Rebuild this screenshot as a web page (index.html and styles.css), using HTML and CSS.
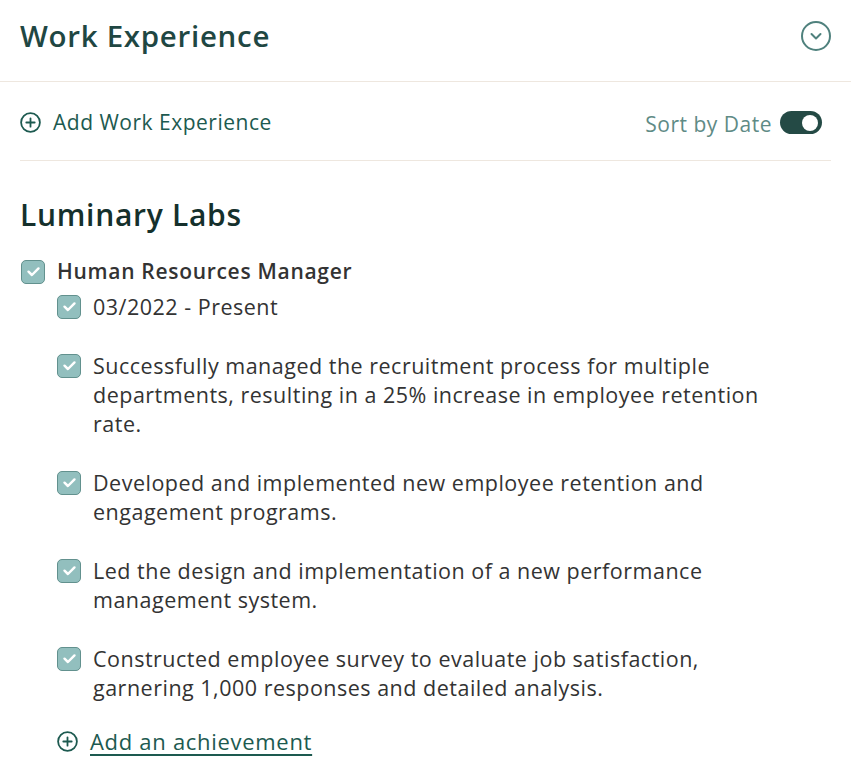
FILE: index.html
```html
<!DOCTYPE html>
<html lang="en">
<head>
<meta charset="utf-8">
<title>Work Experience</title>
<link rel="stylesheet" href="styles.css">
</head>
<body>
<section class="panel">
  <header class="panel-header">
    <h1 class="panel-title">Work Experience</h1>
    <button class="collapse-btn" aria-label="Collapse">
      <svg width="32" height="32" viewBox="0 0 32 32" fill="none" stroke="#4f817d" stroke-width="2" stroke-linecap="round" stroke-linejoin="round"><circle cx="16" cy="16" r="14"/><path d="M11.5 14l4.5 4.5 4.5-4.5"/></svg>
    </button>
  </header>

  <div class="actions">
    <a class="add-link" href="#">
      <svg class="plus-icon" width="21" height="21" viewBox="0 0 21 21" fill="none" stroke="currentColor" stroke-width="1.8" stroke-linecap="round"><circle cx="10.5" cy="10.5" r="9.4"/><path d="M10.5 6.3v8.4M6.3 10.5h8.4"/></svg>
      <span>Add Work Experience</span>
    </a>
    <label class="sort">
      <span>Sort by Date</span>
      <span class="toggle"><span class="knob"></span></span>
    </label>
  </div>

  <div class="company">
    <h2 class="company-name">Luminary Labs</h2>
    <div class="role">
      <span class="check"><svg viewBox="0 0 24 24"><path d="M6.3 12.2l3.9 3.8 7.5-7.5" fill="none" stroke="#fff" stroke-width="2.8" stroke-linecap="round" stroke-linejoin="round"/></svg></span>
      <span class="role-title">Human Resources Manager</span>
    </div>
    <ul class="items">
      <li class="item">
        <span class="check"><svg viewBox="0 0 24 24"><path d="M6.3 12.2l3.9 3.8 7.5-7.5" fill="none" stroke="#fff" stroke-width="2.8" stroke-linecap="round" stroke-linejoin="round"/></svg></span>
        <span class="item-text">03/2022 - Present</span>
      </li>
      <li class="item">
        <span class="check"><svg viewBox="0 0 24 24"><path d="M6.3 12.2l3.9 3.8 7.5-7.5" fill="none" stroke="#fff" stroke-width="2.8" stroke-linecap="round" stroke-linejoin="round"/></svg></span>
        <span class="item-text">Successfully managed the recruitment process for multiple departments, resulting in a 25% increase in employee retention rate.</span>
      </li>
      <li class="item">
        <span class="check"><svg viewBox="0 0 24 24"><path d="M6.3 12.2l3.9 3.8 7.5-7.5" fill="none" stroke="#fff" stroke-width="2.8" stroke-linecap="round" stroke-linejoin="round"/></svg></span>
        <span class="item-text">Developed and implemented new employee retention and engagement programs.</span>
      </li>
      <li class="item">
        <span class="check"><svg viewBox="0 0 24 24"><path d="M6.3 12.2l3.9 3.8 7.5-7.5" fill="none" stroke="#fff" stroke-width="2.8" stroke-linecap="round" stroke-linejoin="round"/></svg></span>
        <span class="item-text">Led the design and implementation of a new performance management system.</span>
      </li>
      <li class="item">
        <span class="check"><svg viewBox="0 0 24 24"><path d="M6.3 12.2l3.9 3.8 7.5-7.5" fill="none" stroke="#fff" stroke-width="2.8" stroke-linecap="round" stroke-linejoin="round"/></svg></span>
        <span class="item-text">Constructed employee survey to evaluate job satisfaction, garnering 1,000 responses and detailed analysis.</span>
      </li>
    </ul>
    <a class="add-achievement" href="#">
      <svg class="plus-icon" width="21" height="21" viewBox="0 0 21 21" fill="none" stroke="currentColor" stroke-width="1.8" stroke-linecap="round"><circle cx="10.5" cy="10.5" r="9.4"/><path d="M10.5 6.3v8.4M6.3 10.5h8.4"/></svg>
      <span class="achievement-text">Add an achievement</span>
    </a>
  </div>
</section>
</body>
</html>
```

FILE: styles.css
```css
* { box-sizing: border-box; }
html, body { margin: 0; padding: 0; background: #fff; }
body {
  font-family: "Open Sans", "Liberation Sans", sans-serif;
  color: #333;
}
.panel { width: 851px; }

.panel-header {
  height: 82px;
  padding: 0 19px 10px 20px;
  display: flex;
  align-items: center;
  justify-content: space-between;
  border-bottom: 1px solid #eee7df;
}
.panel-title {
  margin: 0;
  font-size: 29.5px;
  font-weight: 600;
  color: #1f4743;
  letter-spacing: 0.7px;
}
.collapse-btn {
  border: 0;
  background: none;
  padding: 0;
  width: 32px;
  height: 32px;
  display: flex;
}

.actions {
  margin: 0 20px;
  height: 79px;
  display: flex;
  align-items: center;
  justify-content: space-between;
  border-bottom: 1px solid #eee7df;
  padding-top: 2px;
}
.add-link {
  display: flex;
  align-items: center;
  gap: 12px;
  text-decoration: none;
  color: #1d5a50;
  font-size: 21px;
  letter-spacing: 0.5px;
}
.sort {
  display: flex;
  align-items: center;
  gap: 8px;
  color: #5f8b86;
  font-size: 21px;
  letter-spacing: 0.5px;
  margin-right: 9px;
  padding-top: 3px;
}
.toggle {
  width: 42px;
  height: 23px;
  border-radius: 12px;
  background: #244a45;
  display: flex;
  align-items: center;
  justify-content: flex-end;
  padding-right: 4px;
  margin-top: -2px;
}
.knob {
  width: 16px;
  height: 16px;
  border-radius: 50%;
  background: #fff;
}

.company { padding: 36px 20px 0 20px; }
.company-name {
  margin: 0;
  font-size: 30px;
  line-height: 35px;
  font-weight: 600;
  letter-spacing: 0.7px;
  color: #15302c;
}
.check {
  flex: none;
  width: 24px;
  height: 24px;
  border-radius: 5px;
  background: #92bfbe;
  border: 1.5px solid #62918e;
  display: flex;
  align-items: center;
  justify-content: center;
  margin-top: 2.5px;
}
.check svg { width: 21px; height: 21px; display: block; }
.role {
  margin-top: 25px;
  display: flex;
  align-items: flex-start;
  gap: 12px;
  padding-left: 1px;
}
.role-title {
  font-size: 21px;
  font-weight: 600;
  line-height: 29px;
  letter-spacing: 0.7px;
  color: #333;
}
.items {
  list-style: none;
  margin: 6px 0 0 0;
  padding: 0 0 0 37px;
}
.item {
  display: flex;
  align-items: flex-start;
  gap: 12px;
  margin-bottom: 30px;
}
.item:last-child { margin-bottom: 0; }
.item-text {
  font-size: 21.5px;
  line-height: 29px;
  letter-spacing: 0.5px;
  color: #333;
  max-width: 682px;
}
.add-achievement {
  margin: 25px 0 0 37px;
  display: flex;
  align-items: center;
  gap: 12px;
  color: #1d5a50;
  text-decoration: none;
  font-size: 22px;
  line-height: 29px;
  letter-spacing: 0.7px;
}
.achievement-text {
  text-decoration: underline;
  text-underline-offset: 4px;
  text-decoration-thickness: 1.5px;
}
```
